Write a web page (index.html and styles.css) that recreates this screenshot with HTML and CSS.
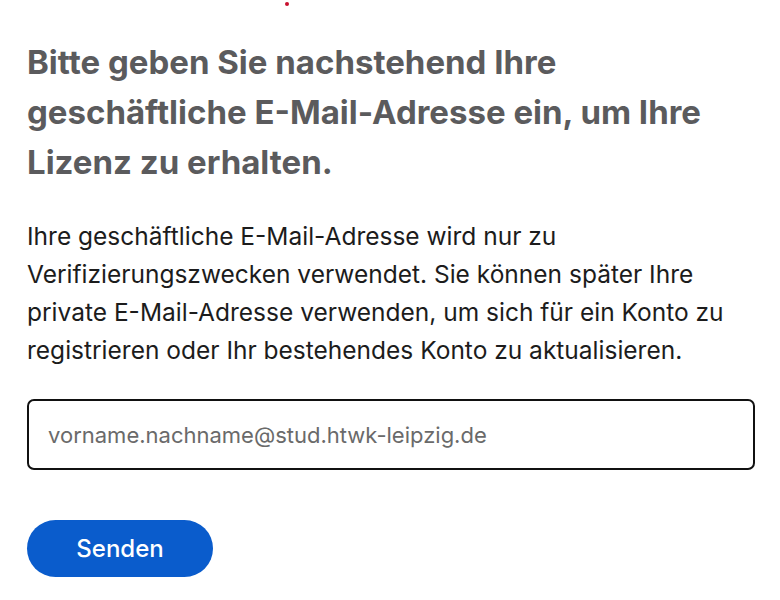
FILE: index.html
```html
<!DOCTYPE html>
<html lang="de">
<head>
    <meta charset="UTF-8">
    <meta name="viewport" content="width=device-width, initial-scale=1.0">
    <title>Lizenz erhalten</title>
    <link rel="stylesheet" href="styles.css">
</head>
<body>
    <span class="dot"></span>
    <main class="form-page">
        <h1>Bitte geben Sie nachstehend Ihre geschäftliche E-Mail-Adresse ein, um Ihre Lizenz zu erhalten.</h1>
        <p>Ihre geschäftliche E-Mail-Adresse wird nur zu Verifizierungszwecken verwendet. Sie können später Ihre private E-Mail-Adresse verwenden, um sich für ein Konto zu registrieren oder Ihr bestehendes Konto zu aktualisieren.</p>
        <form class="mail-form" onsubmit="return false;">
            <input type="email" placeholder="vorname.nachname@stud.htwk-leipzig.de">
            <button type="submit">Senden</button>
        </form>
    </main>
</body>
</html>
```

FILE: styles.css
```css
body {
    margin: 0;
    padding: 0;
    background: #ffffff;
    font-family: Inter, "Liberation Sans", sans-serif;
}
.dot {
    position: absolute;
    top: 2px;
    left: 285px;
    width: 4px;
    height: 4px;
    border-radius: 50%;
    background: #c8102e;
}
.form-page {
    padding: 37px 25px 0 27px;
}
.form-page h1 {
    margin: 0 0 30px;
    max-width: 720px;
    font-size: 33px;
    line-height: 50px;
    font-weight: bold;
    color: #5b5b5d;
}
.form-page p {
    margin: 0 0 30px;
    max-width: 710px;
    font-size: 24.5px;
    line-height: 38px;
    color: #1c1c1c;
}
.mail-form input {
    display: block;
    box-sizing: border-box;
    width: 100%;
    height: 71px;
    padding: 0 19px;
    border: 2px solid #111111;
    border-radius: 7px;
    font-family: inherit;
    font-size: 22px;
    color: #222222;
    outline: none;
}
.mail-form input::placeholder {
    color: #6a6a6a;
}
.mail-form button {
    display: block;
    margin-top: 50px;
    width: 186px;
    height: 57px;
    border: none;
    border-radius: 29px;
    background: #0a5ccc;
    color: #ffffff;
    font-family: inherit;
    font-size: 24px;
    font-weight: 500;
    cursor: pointer;
}
```
